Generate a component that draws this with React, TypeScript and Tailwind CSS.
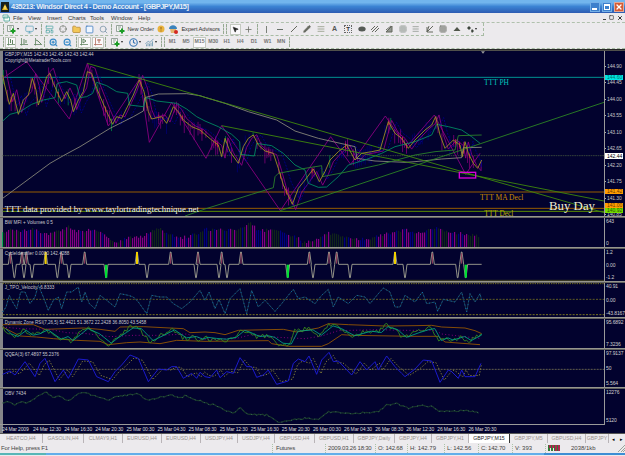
import type { ReactNode } from 'react';
import {
  AlignJustify, ChartNoAxesCombined, Clock, Crosshair, Folder, Grid3x3, LayoutTemplate, Monitor,
  MousePointer2, Pencil, Plus, Search, Square, Triangle, X, ZoomIn, ZoomOut,
} from 'lucide-react';

type Point = [number, number];

// Chart data is kept in thirds of a pixel, one string per screenful of bars
const OFFSETS = [0, 615, 1245];

const parse = (...parts: string[]): Point[] =>
  parts.flatMap((part, i) =>
    part
      .trim()
      .split(/\s+/)
      .filter(Boolean)
      .map((pair) => {
        const [x, y] = pair.split(',').map(Number);
        return [x + OFFSETS[i], y] as Point;
      })
  );

const noise = (i: number) => {
  const v = Math.sin(i * 12.9898) * 43758.5453;
  return v - Math.floor(v);
};

const valueAt = (points: Point[], x: number) => {
  for (let i = 1; i < points.length; i++) {
    if (x <= points[i][0]) {
      const [x0, y0] = points[i - 1];
      const [x1, y1] = points[i];
      return y0 + ((y1 - y0) * (x - x0)) / (x1 - x0 || 1);
    }
  }
  return points[points.length - 1][1];
};

const jitter = (points: Point[], step: number, amount: number): Point[] => {
  const result: Point[] = [];
  for (let x = points[0][0]; x <= points[points.length - 1][0]; x += step) {
    result.push([x, valueAt(points, x) + (noise(x) - 0.5) * amount]);
  }
  return result;
};

const lag = (points: Point[], dx: number, mid: number, factor: number): Point[] =>
  points.map(([x, y]) => [Math.min(x + dx, 1444), mid + (y - mid) * factor] as Point);

const price = parse(
  '8,90 14,120 28,178 40,145 55,208 70,165 85,150 97,100 108,135 115,180 125,150 140,95 150,85 160,115 185,170 200,140 212,165 220,200 235,165 250,140 262,80 275,85 290,130 305,165 320,200 338,238 350,215 365,220 385,180 400,150 418,105 432,140 445,200 455,222 485,215 500,235 520,185 535,200 550,225 575,245 600,255',
  '0,268 20,285 40,300 50,335 60,280 75,320 100,355 115,305 130,280 145,270 160,300 180,318 205,325 220,370 235,420 262,478 280,430 300,405 325,372 343,410 360,380 375,345 400,320 425,300 450,345 470,325 500,320 525,315 550,230 570,265 590,280 610,310',
  '0,285 30,255 50,240 62,215 75,270 90,310 115,285 135,300 142,335 150,290 160,325 175,355 188,370 200,345'
);
const zigzag = parse(
  '8,100 80,50 208,222 262,55 325,243 420,100 448,292 515,172',
  '3,340 50,242 226,497 377,275 437,358 541,213',
  '-25,305 58,210 152,388 195,325'
);
const fastAverage = parse(
  '8,228 30,208 60,200 95,178 130,165 165,158 172,115 200,110 230,120 240,158 260,155 278,145 290,112 320,122 350,140 383,145 388,180 430,185 440,158 470,168 530,175 560,192 590,215',
  '0,228 40,245 80,268 104,290 106,328 148,333 155,295 200,302 235,325 270,360 300,375 310,415 340,427 365,426 400,395 430,360 480,345 530,325 570,305',
  '0,290 50,270 65,238 100,245 140,255 170,275 195,295'
);
const slowAverage = parse(
  '8,460 150,355 190,332 240,305 330,250 400,215 430,198 434,158 475,147 560,146 600,152',
  '0,157 60,175 130,200 215,225 270,258 340,280 450,305 456,340 510,348 600,352',
  '0,350 80,342 140,338 145,308 200,307'
);
const support = parse(
  '555,513',
  '0,492 140,448 205,428 210,395 220,385 300,370 350,362 352,395 420,382 520,360',
  '0,330 60,320 120,315 130,272 200,270'
);
const volumes = parse(
  '8,60 30,50 60,55 100,50 150,65 180,55 205,40 230,55 300,52 345,90 380,75 430,70 470,45 540,78 600,60',
  '0,50 100,50 135,28 160,55 220,50 240,65 280,75 300,92 330,80 370,60 420,72 480,80 540,65 600,50',
  '0,65 60,45 100,60 140,62 194,72'
);
const velocity = parse(
  '8,300 18,285 28,250 38,270 50,290 62,240 75,240 90,275 105,255 115,220 130,255 145,295 160,265 175,255 185,290 200,240 215,240 235,225 245,270 255,240 268,275 285,290 300,250 320,265 345,285 360,245 385,250 400,255 415,270 440,305 455,250 480,255 500,255 520,275 545,290 570,270 600,235',
  '0,265 12,240 30,290 42,262 60,305 75,260 105,230 125,305 140,235 160,285 180,265 210,298 230,275 250,250 265,232 280,260 300,255 330,275 350,250 370,232 385,285 400,255 430,275 455,250 480,255 495,275 520,245 535,228 555,240 570,285 585,285 600,250',
  '0,270 22,240 35,275 60,270 68,298 85,262 120,270 140,240 155,300 165,245 180,270 195,245 200,265'
);
const rsi = parse(
  '8,345 25,365 45,375 70,352 90,370 110,365 135,350 175,385 195,375 210,390 255,345 290,365 325,400 345,380 370,360 390,343 415,345 450,390 480,372 515,350 550,380 580,375 600,385',
  '0,378 25,382 55,385 85,378 110,352 125,358 155,375 180,372 200,378 225,400 250,403 270,355 315,350 340,370 375,335 400,345 440,372 490,355 520,360 540,338 570,350 595,378',
  '0,362 30,350 50,345 70,390 90,380 105,388 140,375 160,390 195,370 200,365'
);
const rsiUpper = parse(
  '8,338 100,338 135,352 250,348 300,352 345,358 360,345 430,344 550,350 570,362',
  '0,360 30,362 60,368 100,355 235,352 275,360 340,348 370,335 430,338 540,342',
  '0,341 50,340 80,345 150,348 180,356 200,365'
);
const rsiLower = parse(
  '8,345 60,372 110,375 160,380 230,385 300,388 325,398 380,392 420,390 480,395 530,385',
  '0,388 190,386 200,395 250,403 350,403 370,395 410,368 440,370',
  '0,373 70,373 90,390 195,398'
);
const rsiMiddle = parse(
  '8,345 60,350 150,352 200,362 260,365 330,374 400,370 480,370 560,366',
  '0,382 90,380 140,368 200,375 300,380 350,372 400,356 520,353 600,355',
  '0,355 60,355 80,366 200,380'
);
const qqe = parse(
  '8,88 30,78 45,90 75,50 105,95 120,55 135,40 150,75 165,110 190,75 205,100 235,42 265,45 290,95 325,110 345,80 365,60 390,30 415,40 445,110 475,72 500,75 515,65 530,65 550,100 575,85 590,100 600,82',
  '0,95 15,98 35,75 45,98 65,80 85,85 105,38 125,65 140,65 155,97 175,90 190,75 215,118 250,108 265,55 280,42 300,50 312,33 335,88 350,45 372,22 385,50 400,48 440,90 465,50 485,75 510,50 520,75 545,33 570,65 590,85 600,95',
  '0,72 25,45 50,48 75,112 100,75 110,80 130,100 140,75 150,95 180,95 198,55'
);
const obv = parse(
  '8,175 20,168 45,180 65,168 75,175 100,165 120,148 138,140 160,160 180,153 205,168 230,148 255,140 270,150 300,155 325,165 350,153 400,148 415,145 440,165 490,155 510,148 540,160 560,150 580,165 600,165',
  '0,175 25,178 50,190 85,205 105,187 130,208 185,210 225,233 260,225 300,220 340,222 370,200 440,205 520,200 545,180 575,175 610,190',
  '10,184 25,178 40,188 50,180 70,200 130,198 150,195 195,205'
);

const spikesUp = [31, 66, 79, 137, 184, 254, 411, 512, 594, 665, 723, 928, 987, 1010, 1185, 1297, 1385];
const spikesDown = [43, 72, 96, 172, 207, 318, 441, 588, 657, 681, 863, 939, 998, 1050, 1215, 1373, 1397];
const strongUp = [137, 411, 1185];
const strongDown = [318, 863, 1397];

const scale = ['144.90', '144.45', '144.00', '143.55', '143.10', '142.65', '142.20', '141.75', '141.30', '140.85'];
const menus = [
  ['File', 'w-[15px]'], ['View', 'w-[19px]'], ['Insert', 'w-[21px]'], ['Charts', 'w-[22px]'],
  ['Tools', 'w-[21px]'], ['Window', 'w-[27px]'], ['Help', 'w-4'],
];
const periods = ['M1', 'M5', 'M15', 'M30', 'H1', 'H4', 'D1', 'W1', 'MN'];
const dates = [
  '24 Mar 2009', '24 Mar 12:30', '24 Mar 16:30', '24 Mar 20:30', '25 Mar 00:30', '25 Mar 04:30', '25 Mar 08:30',
  '25 Mar 12:30', '25 Mar 16:30', '25 Mar 20:30', '26 Mar 00:30', '26 Mar 04:30', '26 Mar 08:30', '26 Mar 12:30',
  '26 Mar 16:30', '26 Mar 20:30',
];
const tabs = [
  ['HEATCO,H4', 'w-[43px]'], ['GASOLIN,H4', 'w-[41px]'], ['CLMAY9,H1', 'w-[39px]'], ['EURUSD,H4', 'w-[39px]'],
  ['EURUSD,H4', 'w-[39px]'], ['USDJPY,H4', 'w-[37px]'], ['USDJPY,H4', 'w-[37px]'], ['GBPUSD,H4', 'w-[40px]'],
  ['GBPUSD,H1', 'w-[39px]'], ['GBPJPY,Daily', 'w-[41px]'], ['GBPJPY,H4', 'w-[37px]'], ['GBPJPY,H1', 'w-[37px]'],
  ['GBPJPY,M15', 'w-[41px]'], ['GBPJPY,M5', 'w-[38px]'], ['GBPUSD,H4', 'w-[38px]'], ['GBPJPY', 'w-[23px]'],
];

interface LineProps {
  points: Point[];
  color: string;
  dash?: string;
  width?: number;
}

const Line = ({ points, color, dash, width = 2.6 }: LineProps) => (
  <polyline points={points.map((p) => p.join(',')).join(' ')} fill="none" stroke={color} strokeWidth={width} strokeDasharray={dash} />
);

const Level = ({ y, color, dash, width = 3 }: { y: number; color: string; dash?: string; width?: number }) => (
  <line x1="8" x2="1812" y1={y} y2={y} stroke={color} strokeWidth={width} strokeDasharray={dash} />
);

interface LabelProps {
  x: number;
  y: number;
  width: number;
  children: string;
  color?: string;
  serif?: boolean;
  size?: number;
}

const Label = ({ x, y, width, children, color = '#c9c9cf', serif, size = 16 }: LabelProps) => (
  <text
    x={x}
    y={y}
    textLength={width}
    lengthAdjust="spacingAndGlyphs"
    fontSize={size}
    fill={color}
    fontFamily={serif ? '"Liberation Serif", serif' : '"Liberation Sans", sans-serif'}
  >
    {children}
  </text>
);

interface PanelProps {
  top: number;
  height: number;
  className: string;
  values?: string[];
  children: ReactNode;
}

/** One indicator window with its own value scale on the right */
const Panel = ({ top, height, className, values, children }: PanelProps) => (
  <div className={`flex shrink-0 ${className}`}>
    <svg className="h-full w-[604px] shrink-0" viewBox={`0 ${top} 1812 ${height}`} preserveAspectRatio="none">
      {children}
    </svg>
    <div className="flex min-w-0 flex-1 flex-col justify-between border-l border-[#9a9a9a] pl-px text-[5px] leading-[7px] tracking-[-0.1px] text-[#d0d0d0]">
      {values?.map((value) => <span key={value}>{value}</span>)}
    </div>
  </div>
);

const Splitter = () => <div className="h-0.5 shrink-0 border-b border-[#62625f] bg-[#96968f]" />;

const Wicks = () => {
  const bars = [];
  for (let x = 10; x < 1440; x += 5.9) {
    const i = Math.round(x);
    if (noise(i + 11) < 0.3) continue;
    const y = valueAt(price, x);
    const up = 2 + noise(i) * 24;
    const down = 2 + noise(i + 7) * 36;
    const rising = valueAt(price, x + 12) < y;
    const color = noise(i + 3) > 0.97 ? '#007d40' : rising ? '#00006f' : '#780073';
    bars.push(<line key={i} x1={x} x2={x} y1={y - up} y2={y + down} stroke={color} strokeWidth="2.6" />);
    if (!rising && noise(i + 5) > 0.75) {
      bars.push(<line key={`b${i}`} x1={x} x2={x} y1={y - 8} y2={y + 8} stroke="#df1350" strokeWidth="2.6" />);
    }
  }
  return <>{bars}</>;
};

const Volumes = () => {
  const bars = [];
  const colors = ['#9d0093', '#142c18', '#00008f', '#9d0093', '#9d0093', '#142c18'];
  for (let x = 8; x < 1440; x += 6) {
    const i = Math.round(x);
    const y = valueAt(volumes, x) + noise(i) * 10 - 3;
    bars.push(
      <line key={i} x1={x} x2={x} y1={y} y2="105" stroke={i === 8 ? '#00b050' : colors[Math.floor(noise(i + 2) * 6)]} strokeWidth="3" />
    );
  }
  return <>{bars}</>;
};

const Cycle = () => {
  const points: Point[] = [[8, 157]];
  const spikes = [...spikesUp.map((x) => [x, 120] as Point), ...spikesDown.map((x) => [x, 197] as Point)];
  spikes.sort((a, b) => a[0] - b[0]).forEach(([x, y]) => points.push([x - 6, 157], [x - 1, y], [x + 1, y], [x + 6, 157]));
  points.push([1445, 157]);
  return (
    <>
      <Line points={points} color="#a9a995" width={2.6} />
      {spikesUp.map((x) => <line key={x} x1={x} x2={x} y1="124" y2="155" stroke="#a74663" strokeWidth="3" />)}
      {strongUp.map((x) => <rect key={x} x={x - 3} y="120" width="6" height="36" fill="#f0cf00" />)}
      {strongDown.map((x) => <rect key={x} x={x - 3} y="158" width="7" height="39" fill="#00df35" />)}
    </>
  );
};

const Tool = ({ children, pressed, className = 'w-[13.6px]' }: { children?: ReactNode; pressed?: boolean; className?: string }) => (
  <div className={`flex h-[11px] shrink-0 items-center justify-center ${className} ${pressed ? 'border border-[#c4c9c0] bg-[#faf9fb]' : ''}`}>
    {children}
  </div>
);

const Grip = () => <div className="mx-px h-[10px] w-px shrink-0 border-l border-dashed border-[#96aa92]" />;
const Arrow = () => <span className="ml-px border-x-[1.5px] border-t-2 border-x-transparent border-t-[#222]" />;

/** Chart window with a green plus in the corner */
const AddChart = () => (
  <svg className="h-[9px] w-[9px]" viewBox="0 0 9 9">
    <path d="M.5 .5h6v6h-6zM2 2h3M2 4h2" fill="#f4f7f4" stroke="#809087" strokeWidth=".8" />
    <path d="M6 3.5v5M3.5 6h5" stroke="#1b9c25" strokeWidth="2" />
  </svg>
);

const Axes = ({ d, color = '#628562' }: { d: string; color?: string }) => (
  <svg className="h-2 w-2" viewBox="0 0 8 8" fill="none" stroke={color}>
    <path d="M1.5 0v7.5M0 6.5h8" strokeWidth=".8" />
    <path d={d} />
  </svg>
);

const App = () => {
  const ink = '#65685f';

  return (
    <div className="flex h-[456px] w-[625px] flex-col overflow-hidden whitespace-nowrap bg-[#eceaed] font-['Liberation_Sans',sans-serif] text-[#333]">
      {/* Title bar */}
      <div className="flex h-[13px] shrink-0 items-center bg-linear-to-b from-[#72b5ed] from-20% via-[#3b83d3] via-50% to-[#2d5bb2] pr-px pl-px">
        <svg className="h-[10px] w-2" viewBox="0 0 8 10">
          <rect width="8" height="10" fill="#15201f" />
          <path d="M4 2 7 8H1z" fill="#e5b520" />
          <path d="M4 4v3" stroke="#fff3a0" />
        </svg>
        <span className="ml-[2px] text-[7.4px] font-bold leading-[12px] tracking-[-0.48px] text-[#e5edf5]">
          435213: Windsor Direct 4 - Demo Account - [GBPJPY,M15]
        </span>
        <div className="ml-auto flex gap-[2px]">
          <div className="flex h-[10px] w-[10px] items-end border border-[#76b0e7] bg-[#3d80cc] p-px"><div className="h-[2px] w-[5px] bg-white" /></div>
          <div className="flex h-[10px] w-[10px] items-center justify-center border border-[#76b0e7] bg-[#3d80cc]"><div className="h-[6px] w-[6px] border border-t-2 border-white" /></div>
          <div className="flex h-[10px] w-[10px] items-center justify-center border border-[#dfa99b] bg-[#d55c35]"><X size={8} strokeWidth={4} color="white" /></div>
        </div>
      </div>

      {/* Menu */}
      <div className="flex h-[10px] shrink-0 items-center border-b border-dashed border-[#b0c1ad] pl-[2px] text-[6px] leading-[8px]">
        <svg className="mr-[3px] h-2 w-2" viewBox="0 0 8 8">
          <path d="M1 1h5v3H1zM2 3h5.5v4H2z" fill="#f7fff9" stroke="#4da29a" strokeWidth=".8" />
        </svg>
        {menus.map(([name, width]) => <span key={name} className={width}>{name}</span>)}
        <div className="ml-auto flex items-center gap-[3px] pr-[2px]">
          <div className="mt-1 h-px w-[3px] bg-[#444]" />
          <Square size={5} strokeWidth={3} />
          <X size={6} strokeWidth={4} />
        </div>
      </div>

      {/* Standard and drawing tools */}
      <div className="flex h-[13px] w-[484px] shrink-0 items-center border-r border-b border-dashed border-[#a7bba3] pl-[2px] text-[6px]">
        <Grip />
        <Tool className="w-[16px]"><AddChart /><Arrow /></Tool>
        <Tool className="w-[19px]"><Monitor size={9} color="#60a6bd" /><Arrow /></Tool>
        <Grip />
        <Tool className="w-[13px]"><LayoutTemplate size={9} color="#4ba4a3" /></Tool>
        <Tool><Crosshair size={8} color="#737970" /></Tool>
        <Tool><Folder size={9} color="#b38735" fill="#f3c758" /></Tool>
        <Tool><Square size={9} color="#3875bd" fill="#eff6ff" /></Tool>
        <Tool><Search size={9} color="#7791a5" /></Tool>
        <Grip />
        <Tool className="w-[14px]"><AddChart /></Tool>
        <span className="w-[29px] text-[5.5px]">New Order</span>
        <Tool className="w-[10px]">
          <svg className="h-2 w-2" viewBox="0 0 8 8"><circle cx="4" cy="4" r="3.5" fill="#e9b33e" /><path d="M4 2v2.5M4 5.5v1" stroke="#93651b" /></svg>
        </Tool>
        <Tool className="w-[15px]">
          <svg className="h-[9px] w-[9px]" viewBox="0 0 9 9"><path d="M0 4c0-5 8-5 8 0z" fill="#3a83bc" /><path d="M1 4h6v4H2z" fill="#e3b46e" /><circle cx="7" cy="7" r="2" fill="#d32820" /></svg>
        </Tool>
        <span className="w-[41px] text-[5.8px] tracking-[-0.12px]">Expert Advisors</span>
        <Grip /><Grip />
        <Tool pressed className="ml-[2px] w-[11px]"><MousePointer2 size={7} fill="#222" color="#222" /></Tool>
        <Tool className="w-[15px]"><Plus size={9} color={ink} strokeWidth={2} /></Tool>
        <Grip />
        <Tool className="w-[14px]"><div className="h-[7px] w-px bg-[#7b8179]" /></Tool>
        <Tool><div className="h-px w-[6px] bg-[#68716a]" /></Tool>
        <Tool><svg className="h-2 w-2" viewBox="0 0 8 8"><path d="m1 7 6-6" stroke={ink} /></svg></Tool>
        <Tool><Pencil size={8} color={ink} fill={ink} /></Tool>
        <Tool><AlignJustify size={8} color="#828c73" strokeDasharray="3 2" /></Tool>
        <Tool><span className="text-[7px] font-bold text-[#555]">A</span></Tool>
        <Tool><span className="border border-dotted border-[#666] px-px text-[6px] font-bold leading-[6px]">T</span></Tool>
        <Tool><svg className="h-2 w-2" viewBox="0 0 8 8"><ellipse cx="4" cy="4" rx="3.7" ry="2.5" fill="#555a55" /></svg></Tool>
        <Tool><svg className="h-2 w-2" viewBox="0 0 8 8"><path d="m0 5 4-4M1 7l6-6M4 7l4-4" stroke={ink} /></svg></Tool>
        <Tool><svg className="h-2 w-2" viewBox="0 0 8 8"><path d="M1 7 7 1v6zM1 5l5-4" fill="#929690" stroke={ink} /></svg></Tool>
        <Tool><Grid3x3 size={8} color="#909791" strokeDasharray="3 2" /></Tool>
        <Tool><AlignJustify size={8} color="#7d877d" strokeDasharray="4 2" /></Tool>
        <Tool><svg className="h-2 w-2" viewBox="0 0 8 8"><path d="m1 7 6-6M1 7V2M1 7h6M1 7l2-6" stroke={ink} /></svg></Tool>
        <Tool><Grid3x3 size={8} color={ink} /></Tool>
        <Tool><svg className="h-2 w-2" viewBox="0 0 8 8"><path d="m4 2 3.500 4h-7z" fill="#4f554a" /></svg></Tool>
        <Tool className="w-[17px]"><svg className="h-[7px] w-[7px]" viewBox="0 0 7 7"><path d="m0 2 2-2 2 2-2 2zM4 5l1-2 2 2-2 2z" fill="#3c453d" /></svg><Arrow /></Tool>
      </div>

      {/* Chart tools and periods */}
      <div className="flex h-[13px] shrink-0 items-center border-b border-dashed border-[#a7bba3] pl-[2px]">
        <Grip />
        <Tool pressed className="w-[11px]"><Axes d="M3.5 1v4M5.5 2v4" /></Tool>
        <Tool className="w-4"><Axes d="M4 1v5M6 2v3" /></Tool>
        <Tool className="w-[11px]"><Axes d="m2 2 2 1 3 3" /></Tool>
        <Grip />
        <Tool className="w-[15px]"><ZoomIn size={9} color="#398bc8" strokeWidth={3} /></Tool>
        <Tool><ZoomOut size={9} color="#398bc8" strokeWidth={3} /></Tool>
        <Grip />
        <Tool pressed className="w-[13px]"><Axes d="M3 1v4l3-2z" /></Tool>
        <Tool pressed className="ml-px w-[12px]"><Axes d="M3 2h4M5 1v4" color="#b36e60" /></Tool>
        <Grip />
        <Tool className="w-[20px]"><AddChart /><Arrow /></Tool>
        <Tool className="w-[16px]"><Clock size={9} color="#3b78b5" strokeWidth={3} /><Arrow /></Tool>
        <Tool className="w-[17px]"><ChartNoAxesCombined size={9} color="#5d8daa" /><Arrow /></Tool>
        <Grip /><Grip />
        <div className="flex">
          {periods.map((period) => (
            <Tool key={period} pressed={period === 'M15'}><span className="text-[5.2px] font-bold text-[#747474]">{period}</span></Tool>
          ))}
        </div>
        <Grip />
      </div>

      {/* Chart window */}
      <div className="flex h-[384px] shrink-0 flex-col bg-[#02022e]">
        <div className="h-[2px] shrink-0 border-b border-[#50504b] bg-[#292929]" />
        <div className="flex h-[382px] flex-col border-l-[3px] border-[#85858a]">
          <div className="-ml-[3px] flex flex-1 flex-col">
            <div className="relative shrink-0">
              <Panel top={18} height={495} className="h-[165px]">
                <Level y={97} color="#009292" />
                <Level y={332} color="#34413a" dash="5 2" />
                <Level y={441} color="#965c00" />
                <Level y={490} color="#965c00" />
                <Level y={499} color="#5b8e00" />
                <Wicks />
                <Line points={zigzag} color="#8d0083" />
                <Line points={lag(price, 10, 280, 1.08)} color="#8d0083" />
                <Line points={lag(price, 24, 270, 0.95)} color="#00008f" dash="6 4" />
                <Line points={slowAverage} color="#8a8a7b" />
                <Line points={fastAverage} color="#008d63" />
                <Line points={support} color="#2c852a" />
                <Line points={[[262, 55], [1812, 503]]} color="#418d0b" />
                <Line points={[[665, 242], [1812, 468]]} color="#418d0b" />
                <Line points={[[841, 497], [1812, 172]]} color="#2d8a24" />
                <Line points={price} color="#a39320" />
                <rect x="1378" y="382" width="49" height="17" fill="none" stroke="#d800d8" strokeWidth="4" />
                <path d="M1443 19h12l-6 7z" fill="#999" />
                <Label x={14} y={34} width={267}>GBPJPY,M15  142.43 142.45 142.43 142.44</Label>
                <Label x={14} y={50} width={199}>Copyright@MetatraderTools.com</Label>
                <Label x={14} y={500} width={583} size={26} color="#efefef" serif>TTT data provided by www.taylortradingtechnique.net</Label>
                <Label x={1452} y={120} width={75} size={26} color="#00c5bd" serif>TTT PH</Label>
                <Label x={1440} y={465} width={130} size={25} color="#c98b00" serif>TTT MA Decl</Label>
                <Label x={1453} y={512} width={87} size={23} color="#b9b000" serif>TTT Decl</Label>
                <Label x={1647} y={496} width={138} size={35} color="#f0eed7" serif>Buy Day</Label>
              </Panel>
              <div className="absolute top-[12.500px] left-[605px] flex w-5 flex-col text-[5px] leading-[5px] tracking-[-0.1px] text-[#c5c5c5]">
                {scale.map((value) => (
                  <div key={value} className="flex h-[16.5px] items-start">
                    <span className="mt-[2px] h-px w-px bg-[#aaa]" />
                    <span className="ml-px">{value}</span>
                  </div>
                ))}
              </div>
              <div className="absolute top-[24px] left-[605px] h-[5px] w-[18px] bg-[#00e5e5] pl-[2px] text-[5px] leading-[5px] text-[#076]">144.60</div>
              <div className="absolute top-[102px] left-[605px] h-[6px] w-[18px] bg-white pl-[2px] text-[5px] leading-[6px] text-black">142.44</div>
              <div className="absolute top-[138px] left-[605px] h-[5px] w-[18px] bg-[#ff9d00] pl-[2px] text-[5px] leading-[5px] text-[#6b3800]">141.42</div>
              <div className="absolute top-[152px] left-[605px] h-[5px] w-[18px] bg-[#ff9d00] pl-[2px] text-[5px] leading-[5px] text-[#6b3800]">141.00</div>
              <div className="absolute top-[157px] left-[605px] h-[5px] w-[18px] bg-[#74dc00] pl-[2px] text-[5px] leading-[5px] text-[#295600]">140.92</div>
            </div>
            <Splitter />
            <Panel top={18} height={87} className="h-[29px]" values={['643', '0']}>
              <Volumes />
              <Label x={14} y={35} width={145}>BW MFI + Volumes 0 5</Label>
            </Panel>
            <Splitter />
            <Panel top={111} height={96} className="h-8" values={['1.2', '0.00', '-1.2']}>
              <Cycle />
              <Level y={205} color="#626019" width={2} />
              <Label x={14} y={130} width={194}>CycleIdentifier 0.0000 142.4288</Label>
            </Panel>
            <Splitter />
            <Panel top={213} height={102} className="h-[34px]" values={['40.91', '0.00', '-43.8167']}>
              <Level y={215} color="#77721e" dash="4 3" />
              <Level y={262} color="#5f5c23" dash="6 4" />
              <Level y={308} color="#77721e" dash="6 4" />
              <Line points={velocity} color="#203d4c" />
              <Line points={velocity} color="#0878bd" dash="3 8" />
              <Label x={14} y={230} width={149}>J_TPO_Velocity -6.8333</Label>
            </Panel>
            <Splitter />
            <Panel top={321} height={87} className="h-[29px]" values={['95.6892', '7.3236']}>
              <Line points={rsiUpper} color="#995800" />
              <Line points={rsiLower} color="#995800" />
              <Line points={rsiMiddle} color="#9a0086" dash="3 7" />
              <Line points={jitter(rsi, 6, 14)} color="#388f1b" />
              <Line points={lag(rsi, 9, 368, 0.8)} color="#00a382" />
              <Label x={14} y={337} width={425}>Dynamic Zone RSI(7,26,5) 52.4421 51.3672 22.2428 36.8050 43.5458</Label>
            </Panel>
            <Splitter />
            <Panel top={15} height={111} className="h-[37px]" values={['97.9137', '50', '5.564']}>
              <Level y={73} color="#777453" dash="6 3" width={2.5} />
              <Line points={lag(qqe, 13, 75, 0.82)} color="#96903b" dash="4 5" />
              <Line points={qqe} color="#1b1bcb" width={3} />
              <Label x={14} y={34} width={163}>QQEA(3) 67.4897 55.2376</Label>
            </Panel>
            <Splitter />
            <Panel top={132} height={105} className="h-[35px]" values={['12276', '5120']}>
              <Line points={jitter(obv, 6, 5)} color="#18362a" width={3.5} />
              <Line points={jitter(obv, 6, 5)} color="#3c725d" dash="3 12" />
              <Label x={14} y={150} width={64}>OBV 7434</Label>
            </Panel>
            <div className="h-px w-[605px] shrink-0 bg-[#9a9a9a]" />
            <div className="flex h-2 shrink-0 pl-[2px] text-[5px] leading-[8px] tracking-[-0.13px] text-[#ddd]">
              {dates.map((date) => <span key={date} className="w-[31.1px] shrink-0">{date}</span>)}
            </div>
          </div>
        </div>
      </div>

      {/* Chart tabs */}
      <div className="flex h-[10px] shrink-0 border-t border-[#555] text-[5.2px] leading-[8px] text-[#99918e]">
        {tabs.map(([name, width], i) => (
          <div
            key={i}
            className={`shrink-0 overflow-hidden border-r text-center ${width} ${name === 'GBPJPY,M15' ? 'border-[#333] bg-white text-[#222]' : 'border-[#b9b4b7]'}`}
          >
            {name}
          </div>
        ))}
        <div className="flex flex-1 items-center justify-around text-[5px] text-black"><span>◂</span><span>▸</span></div>
      </div>

      {/* Status bar */}
      <div className="flex h-[10px] shrink-0 items-center text-[6px] leading-[9px] text-[#444] *:shrink-0 *:border-[#abc3a8]">
        <span className="w-[273px] border-r border-dotted pl-px tracking-[-0.15px]">For Help, press F1</span>
        <span className="w-[53px] border-r border-dotted pl-[3px] tracking-[-0.2px]">Futures</span>
        <span className="w-[50px] border-r border-dotted pl-[2px] tracking-[-0.2px]">2009.03.26 18:30</span>
        <span className="w-8 border-r border-dotted pl-[2px] tracking-[-0.2px]">O: 142.68</span>
        <span className="w-[37px] border-r border-dotted pl-[2px]">H: 142.79</span>
        <span className="w-[34px] border-r border-dotted pl-[2px] tracking-[-0.1px]">L: 142.56</span>
        <span className="w-[34px] border-r border-dotted pl-[2px] tracking-[-0.2px]">C: 142.70</span>
        <span className="w-[33px] border-r border-dotted pl-[2px]">V: 393</span>
        <svg className="mx-[2px] h-[6px] w-3" viewBox="0 0 12 6">
          <path d="M1 0v6M4 0v6M7 0v6M10 0v6" stroke="#347b36" strokeWidth="2" />
          <path d="M2 0v3M5 0v3M8 0v6M11 0v6" stroke="#ad284f" strokeWidth="2" />
        </svg>
        <span className="ml-[9px]">2038/1kb</span>
        <svg className="ml-auto h-2 w-[7px]" viewBox="0 0 7 8"><path d="m0 8 7-7M3 8l4-4M5 8l2-2" stroke="#9aa499" /></svg>
      </div>
      <div className="flex h-[2px] shrink-0 bg-[#3d8ed4]"><div className="w-[46px] bg-[#58b6b7]" /><div className="w-[498px] bg-[#62aeea]" /></div>
    </div>
  );
};

export default App;
